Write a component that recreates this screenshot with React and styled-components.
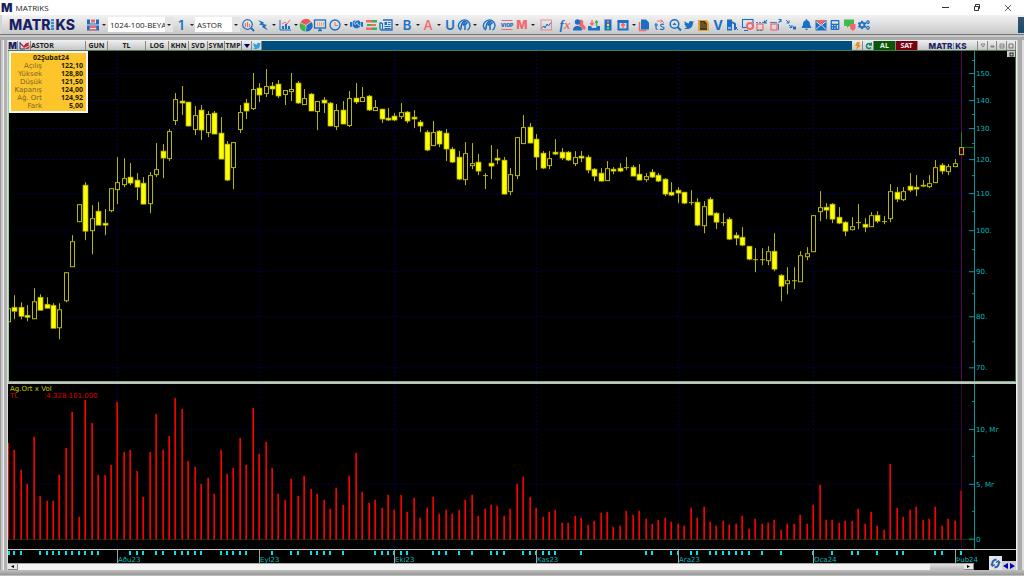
import React from "react";
import styled, { createGlobalStyle } from "styled-components";
import { FaTwitter, FaBell, FaHandshake, FaCalculator, FaCogs } from "react-icons/fa";

const BLUE = "#1b6fc4";
const RED = "#f2686c";
const NAVY = "#1c1f63";
const SANS = '"Open Sans", "Noto Sans", sans-serif';
const CHART = '"DejaVu Sans", Verdana, sans-serif';

const GlobalStyle = createGlobalStyle`
  * { box-sizing: border-box; }
  body { margin: 0; background: #b4b4b4; font-family: ${SANS}; }
  button, select { font: inherit; margin: 0; border: 0; padding: 0; }
`;

/* ---------- data: high, body top, body bottom, low, kind (f filled, h hollow, t thin) ---------- */
const candles = [
  [308,308,321,321,"h"],[295,307,311,319,"f"],[302,307,316,319,"f"],[305,315,317,321,"f"],[288,301,318,318,"h"],
  [294,297,310,310,"f"],[297,304,308,308,"f"],[303,305,328,328,"f"],[303,309,327,339,"h"],[272,272,300,302,"h"],
  [235,241,266,266,"h"],[204,204,221,222,"h"],[182,185,231,240,"f"],[205,218,230,254,"h"],[202,211,225,225,"f"],
  [209,223,225,235,"f"],[188,188,210,212,"h"],[157,182,189,204,"h"],[158,178,184,187,"h"],[163,177,183,185,"f"],
  [173,180,187,200,"f"],[177,183,204,204,"f"],[172,175,203,213,"h"],[143,169,174,177,"h"],[144,151,158,178,"f"],
  [129,131,158,161,"h"],[93,99,120,125,"h"],[86,101,103,115,"f"],[102,102,126,126,"f"],[106,115,129,135,"h"],
  [105,110,130,140,"f"],[111,114,132,137,"h"],[111,113,134,134,"f"],[117,133,159,159,"f"],[141,144,180,181,"f"],
  [142,142,167,189,"h"],[105,112,129,133,"h"],[99,103,111,119,"f"],[73,89,108,110,"h"],[83,88,95,102,"f"],
  [69,86,93,97,"h"],[82,86,89,95,"f"],[80,84,96,98,"f"],[90,90,94,105,"h"],[73,89,91,101,"h"],
  [81,83,103,104,"f"],[89,98,104,104,"h"],[93,94,111,111,"f"],[101,101,111,130,"h"],[97,100,103,113,"f"],
  [102,103,126,126,"f"],[104,110,126,130,"h"],[101,110,124,124,"f"],[91,98,125,127,"h"],[83,98,102,104,"f"],
  [87,97,101,101,"h"],[95,96,110,111,"f"],[100,107,110,111,"h"],[109,109,119,123,"f"],[108,118,120,121,"f"],
  [113,116,120,121,"f"],[103,112,116,119,"h"],[111,112,121,123,"f"],[110,117,119,128,"f"],[120,122,126,132,"f"],
  [130,132,150,151,"f"],[121,132,145,145,"h"],[130,131,144,147,"f"],[129,133,149,161,"f"],[147,149,162,163,"f"],
  [151,157,179,180,"f"],[142,153,179,185,"h"],[143,163,165,169,"h"],[154,162,171,175,"f"],[173,175,176,189,"t"],
  [145,163,166,179,"f"],[149,158,160,164,"f"],[157,160,194,194,"f"],[168,174,191,195,"h"],[137,137,175,179,"h"],
  [115,127,143,144,"h"],[123,127,143,143,"f"],[134,139,157,170,"f"],[151,153,168,169,"f"],[151,158,165,169,"h"],
  [139,152,154,155,"f"],[148,152,158,160,"f"],[151,152,160,161,"f"],[151,157,163,166,"h"],[151,156,158,162,"f"],
  [155,157,170,173,"f"],[168,169,176,181,"f"],[168,173,181,181,"f"],[161,168,180,180,"h"],[167,169,171,174,"f"],
  [163,168,171,172,"f"],[157,167,168,170,"t"],[165,167,176,176,"f"],[164,174,180,180,"f"],[173,176,179,182,"h"],
  [169,172,177,178,"f"],[173,175,181,182,"f"],[178,179,194,196,"f"],[182,192,195,196,"f"],[187,190,193,203,"f"],
  [192,192,203,204,"f"],[190,202,203,205,"t"],[198,202,225,226,"f"],[201,206,225,233,"h"],[197,199,215,215,"f"],
  [212,213,222,229,"f"],[213,222,223,226,"t"],[217,219,239,240,"f"],[232,235,238,245,"f"],[227,237,245,246,"f"],
  [246,246,259,260,"f"],[248,259,260,272,"t"],[248,259,260,265,"t"],[246,251,260,265,"h"],[233,251,269,271,"f"],
  [274,275,286,301,"f"],[267,280,283,294,"h"],[267,280,281,289,"t"],[251,255,281,281,"h"],[247,253,256,260,"h"],
  [215,215,251,251,"h"],[191,207,211,221,"h"],[203,207,210,219,"f"],[203,204,219,223,"f"],[207,217,223,224,"f"],
  [221,222,231,236,"f"],[217,226,229,230,"h"],[204,222,223,229,"t"],[218,224,227,232,"f"],[212,215,226,226,"h"],
  [211,215,221,223,"f"],[216,221,222,224,"t"],[184,191,218,222,"h"],[187,192,199,202,"f"],[187,191,199,201,"h"],
  [173,186,190,192,"f"],[175,187,189,196,"f"],[180,185,186,187,"f"],[175,183,186,188,"h"],[160,167,182,182,"h"],
  [163,165,171,174,"f"],[164,166,171,175,"h"],[159,163,166,166,"h"],[132,147,154,154,"h"],
];

/* tops of the volume bars, in thirds of a unit below the panel's upper edge */
const volumes = [
  188,209,271,313,171,349,364,364,286,205,97,411,60,129,286,286,256,67,217,209,274,352,215,101,209,167,53,88,244,262,
  313,293,341,211,283,265,175,256,85,221,187,263,341,361,297,349,288,328,341,360,388,325,374,288,219,335,369,361,383,345,
  391,345,395,353,415,385,352,401,391,401,391,360,345,409,387,375,377,407,387,313,291,352,385,411,397,389,428,428,407,415,
  435,424,400,397,441,437,393,405,393,417,431,419,413,425,433,437,385,413,381,425,437,424,435,433,409,447,417,432,430,419,
  451,433,431,405,432,374,315,421,421,428,424,424,388,433,396,437,451,251,384,411,391,381,419,417,381,437,417,424,333,
];

const dayTicks = [
  0,1,2,5,6,7,8,9,10,11,12,13,14,19,20,21,23,24,26,27,28,29,30,33,34,35,36,37,41,44,45,47,48,49,50,52,57,58,59,60,61,62,
  66,67,68,70,72,75,76,77,80,81,82,83,84,85,89,99,100,103,104,106,107,109,110,111,112,113,114,115,117,120,125,128,131,
  132,135,138,139,144,145,148,
];

const months = [[17,"Aðu23"],[39,"Eyl23"],[60,"Eki23"],[82,"Kas23"],[104,"Ara23"],[125,"Oca24"],[147,"Þub24"]];
const prices = [[150,73],[140,100],[130,128],[120,159],[110,193],[100,230],[90,271],[80,316],[70,367]];
const barX = (i) => Math.floor(8.45 + 6.441 * i);
const PLOT_LEFT = 8;
const PLOT_WIDTH = 966;

/* ---------- window ---------- */
const Window = styled.div`
  display: flex;
  flex-direction: column;
  height: 100vh;
  min-height: 420px;
  overflow: hidden;
  background: #b0b0b0;
`;

const TitleBar = styled.header`
  display: flex;
  align-items: center;
  flex: none;
  height: 15px;
  padding: 0 10px 0 1px;
  gap: 3px;
  background: #fff;
  font-size: 8px;
  line-height: 15px;
  color: #222;
`;
const Monogram = styled.span`
  font-family: Inter, sans-serif;
  font-weight: 900;
  font-size: ${(p) => p.$size}px;
  line-height: 1;
  color: ${NAVY};
`;
const AppName = styled.span`flex: 1;`;
const WindowButton = styled.button`
  display: grid;
  place-items: center;
  width: 12px;
  height: 15px;
  margin-left: 16px;
  background: none;
`;

const Toolbar = styled.nav`
  display: flex;
  align-items: center;
  flex: none;
  height: 19px;
  padding-left: 7px;
  background: linear-gradient(#f2f2f2, #dedede 50%, #c8c8c8);
  border-left: 2px solid #d4d4d4;
`;
const Brand = styled.span`
  display: inline-flex;
  align-items: center;
  justify-content: center;
  font-family: Inter, sans-serif;
  font-weight: 800;
  font-size: ${(p) => p.$size}px;
  line-height: 1;
  color: ${NAVY};
`;
const ToolbarBrand = styled(Brand)`
  flex: none;
  width: 77px;
  justify-content: flex-start;
`;
const BrandDots = styled.svg`
  flex: none;
  margin: 0 1px;
`;
const Tool = styled.button`
  display: flex;
  align-items: center;
  flex: none;
  width: ${(p) => p.$w}px;
  height: 16px;
  background: none;
  color: ${BLUE};
`;
const ToolIcon = styled.span`
  display: grid;
  place-items: center;
  flex: none;
  width: 14px;
  height: 14px;
  svg { display: block; }
`;
const Caret = styled.span`
  flex: none;
  width: 0;
  margin-left: 2px;
  border: 2px solid transparent;
  border-top-color: #222;
  border-bottom: 0;
`;
const Glyph = styled.span`
  font-family: Inter, sans-serif;
  font-weight: ${(p) => p.$weight || 600};
  font-size: ${(p) => p.$size || 13}px;
  line-height: 14px;
  color: ${(p) => p.$color || BLUE};
`;
const Formula = styled.span`
  font: italic 600 13px/14px "Liberation Serif", serif;
  color: ${BLUE};
  i { color: ${RED}; }
`;
const Picker = styled.label`
  position: relative;
  display: flex;
  flex: none;
  width: ${(p) => p.$w}px;
  height: 15px;
  margin-right: 1px;
  background: #fff;
`;
const PickerSelect = styled.select`
  appearance: none;
  flex: 1;
  min-width: 0;
  padding-left: 2px;
  background: #fff;
  border-radius: 0;
  font-size: 8px;
  color: #222;
`;
const PickerArrow = styled.span`
  display: grid;
  place-items: center;
  width: 8px;
  background: #e4e4e4;
  pointer-events: none;
  ${Caret} { margin: 0; }
`;
const ToolbarEnd = styled.span`
  align-self: stretch;
  width: 6px;
  margin: 2px 0 1px auto;
  background: linear-gradient(#35566c, #164a6e);
`;

/* ---------- chart window ---------- */
const Frame = styled.main`
  display: flex;
  flex-direction: column;
  flex: 1;
  min-height: 0;
  padding: 6px 8px 6px;
  background:
    linear-gradient(#777 0 1px, #c8c8c8 1px 3px, #aaa 3px) top / 100% 6px no-repeat,
    linear-gradient(#c0c0c0, #999 80%, #d6d6d6) bottom / 100% 6px no-repeat,
    linear-gradient(90deg, #999 0 1px, #c8c8c8 1px 3px, #f0f0f0 3px 4px, #b0b0b0 4px 7px, #ddd 7px) left / 8px 100% no-repeat,
    linear-gradient(90deg, #eee 0 1px, #ccc 1px 2px, #aaa 2px 6px, #ddd 6px) right / 8px 100% no-repeat;
`;
const ChartBar = styled.div`
  display: flex;
  flex: none;
  height: 11px;
  border-top: 1px solid #e8eef2;
  border-bottom: 1px solid #4c7a50;
  background: #00507f;
  font: bold 7px/9px "Noto Sans", sans-serif;
  color: #222;
`;
const Cell = styled.button`
  display: flex;
  align-items: center;
  justify-content: ${(p) => (p.$start ? "flex-start" : "center")};
  flex: none;
  width: ${(p) => p.$w}px;
  height: 9px;
  border-right: 1px solid #888;
  background: ${(p) => p.$bg || "linear-gradient(#ececec, #c6c6c6)"};
  color: ${(p) => p.$color || "#222"};
`;
const Spacer = styled.span`flex: 1;`;

const Pane = styled.section`
  position: relative;
  display: flex;
  flex: ${(p) => p.$grow} 1 0;
  min-height: 0;
  background: #000;
`;
const PricePane = styled(Pane)`
  border-left: 1px solid #90d890;
  border-right: 1px solid #3a6a3a;
  border-bottom: 1px solid #7fb87f;
`;
const Divider = styled.div`
  flex: none;
  height: 2px;
  background: #c4c4c4;
`;
const Plot = styled.svg`
  display: block;
  flex: 1;
  min-width: 0;
  width: 0;
  height: 100%;
  overflow: hidden;
`;
const AxisScale = styled.svg`
  display: block;
  flex: none;
  width: ${(p) => p.$w}px;
  height: 100%;
  overflow: visible;
  font: 7px ${CHART};
  fill: #00bcbc;
`;
const InfoBox = styled.table`
  position: absolute;
  top: 0;
  left: 0;
  width: 79px;
  padding: 1px 3px 1px 0;
  border: 2px solid #f4f4f4;
  border-collapse: separate;
  border-spacing: 0;
  background: #fcc52c;
  font: 7px/8px ${CHART};
  td, th { padding: 0; height: 8px; text-align: right; white-space: nowrap; }
  th { width: 31px; font-weight: normal; color: #7d6524; }
  td { font: bold 7px/8px "Noto Sans", sans-serif; color: #221a00; }
`;
const InfoTitle = styled.td`
  && { padding-left: 8px; text-align: center; }
`;
const Maximise = styled.button`
  position: absolute;
  top: 0;
  right: 0;
  display: grid;
  place-items: center;
  width: 8px;
  height: 6px;
  background: #ccc;
`;
const VolumeLegend = styled.div`
  position: absolute;
  top: 2px;
  left: 2px;
  font: 7px/7px ${CHART};
  color: #cccc00;
`;
const VolumeValue = styled.div`
  display: flex;
  color: #dc0000;
  span:first-child { width: 34px; }
`;
const Footer = styled.div`
  display: flex;
  flex: none;
  height: 21px;
  border-top: 1px solid #c8c8c8;
  background: #000;
`;
const FooterMain = styled.div`
  display: flex;
  flex-direction: column;
  flex: 1;
  min-width: 0;
`;
const TimeAxis = styled.svg`
  display: block;
  width: 100%;
  height: 13px;
  overflow: visible;
  font: 7px ${CHART};
  fill: #00bcbc;
`;
const ScrollBar = styled.div`
  display: flex;
  height: 7px;
  border-top: 1px solid #aaa;
  background: #f4f4f4;
`;
const ScrollButton = styled.button`
  width: 10px;
  height: 6px;
  display: grid;
  place-items: center;
  background: #e6e6e6;
  border-right: 1px solid #888;
  border-bottom: 1px solid #888;
`;
const Thumb = styled.span`
  width: 34px;
  margin-left: auto;
  background: linear-gradient(#e0e0e0, #b8b8b8);
`;
const FooterTools = styled.div`
  display: flex;
  align-items: flex-end;
  justify-content: flex-end;
  width: 42px;
`;
const RefreshButton = styled.button`
  display: grid;
  place-items: center;
  width: 13px;
  height: 14px;
  background: #e2e4ea;
`;
const StepButton = styled.button`
  display: grid;
  place-items: center;
  width: 7px;
  height: 9px;
  background: #d0d0d0;
`;

/* ---------- toolbar icons, on a 14-unit square ---------- */
const Svg = ({ children, size = 14 }) => (
  <svg width={size} height={size} viewBox="0 0 14 14" fill="none" aria-hidden="true">{children}</svg>
);
const icons = {
  save: <Svg><path d="M1 1.500h3v4h6v-4h3v11H1z" fill={BLUE} /><path d="M5 1.500h4V4.500H5zM3.500 8h7v4.500h-7z" fill={RED} /><path d="M1 7h12M4 10.500h6" stroke="#f4e4e4" /></Svg>,
  search: <Svg><circle cx="6.500" cy="6.500" r="4.800" stroke={BLUE} strokeWidth="1.200" /><path d="M10 10l3 3" stroke={BLUE} strokeWidth="1.800" /><path d="M4.500 5v4M6.500 4v5M8.500 6v3" stroke={RED} /></Svg>,
  bolt: <Svg><path d="M2 2l6 2.500-1 1.500 4 1-2 1.500 3 4-6-3.500 1-1.500-4-1 2-1.500z" fill={BLUE} /></Svg>,
  columns: <Svg><path d="M2 2v10h11" stroke={BLUE} /><path d="M4 8h2v3H4zM7 6h2v5H7zM10 8h2v3h-2z" fill={BLUE} /><path d="M4 6l3-2 2 2 3-4" stroke={RED} /></Svg>,
  pie: <Svg><path d="M6.500 7.500L1.200 5a6 6 0 0 0 5.300 8.500z" fill="#39b54a" /><path d="M7 7l-5.500-2.500A6 6 0 0 1 12 3.500z" fill="#ee5558" /><path d="M7.500 7.500l5-3.500a6 6 0 0 1-5.500 9.500z" fill={BLUE} /></Svg>,
  screen: <Svg><rect x="1.500" y="2" width="11" height="8" stroke={BLUE} strokeWidth="1.300" /><path d="M5 12.500h4M7 10v2" stroke={BLUE} strokeWidth="1.500" /><path d="M4.500 4v4M6.500 4v4M8.500 4v4M10.500 4v4" stroke="#ecab76" /></Svg>,
  clock: <Svg><circle cx="7" cy="7" r="5" stroke={BLUE} strokeWidth="1.300" /><path d="M7 4v3.500h3" stroke={RED} /></Svg>,
  hands: <FaHandshake size={13} />,
  depth: <Svg><path d="M2 2h6v2.500H2zM7 6h5v2H7zM2 9.500h6V12H2z" fill={RED} /><path d="M8 2h5v2.500H8zM3 6h4v2H3zM8 9.500h5V12H8z" fill="#3bb54a" /></Svg>,
  news: <Svg><path d="M4 2h9v10H3c-1.500 0-2-.8-2-2V5h2" stroke={BLUE} strokeWidth="1.300" /><path d="M5.500 4h2.500v3H5.500z" fill={BLUE} /><path d="M9 4.500h2.500M9 6.500h2.500M5.500 8.500h6M5.500 10.500h6M3.500 5v6" stroke={BLUE} /></Svg>,
  globe: <Svg><path d="M4 12C1 10.500.5 6.500 3 4s6-3 8.500-.2 1.500 7-1 8.200" stroke={BLUE} strokeWidth="1.400" /><path d="M4 11c0-4 1-7 4-8l2 2-2 2v5M6 7.500l2-3" stroke={BLUE} strokeWidth="1.500" /></Svg>,
  chart: <Svg><rect x="2" y="2" width="10.500" height="10" stroke={RED} strokeWidth=".7" /><path d="M2.500 10l2.500-2 1 2 2-4 1.500 2L12 4.500" stroke={BLUE} /></Svg>,
  users: <Svg><path d="M7.500 2c3-1 4.500 1 3.500 4l2.500 3v2.500H10c0-2-1-3-3-4z" fill={RED} /><circle cx="5.500" cy="4" r="2.700" fill={BLUE} /><path d="M1 12.500c0-3.500 2-4.500 4.500-4.500s4.500 1 4.500 4.500z" fill={BLUE} /></Svg>,
  inbox: <Svg><path d="M1 8h3l1 2h4l1-2h3v4.500H1z" fill={BLUE} /><path d="M5 2v5M3 5l2 2 2-2" stroke={RED} strokeWidth="1.400" /><path d="M9.500 8V3M8 4.500L9.500 3 11 4.500" stroke="#3bb54a" strokeWidth="1.400" /></Svg>,
  lights: <Svg><rect x="3.500" y="1.500" width="7" height="11" fill={BLUE} /><circle cx="7" cy="3.700" r="1.200" fill="#f66" /><circle cx="7" cy="7" r="1.200" fill="#fd4" /><circle cx="7" cy="10.200" r="1.200" fill="#5d5" /></Svg>,
  upload: <Svg><path d="M1.500 2h11v2h-11z" fill={BLUE} /><rect x="2.500" y="4" width="9" height="7.500" stroke={BLUE} strokeWidth="2" /><path d="M7 10V6M5 7.500L7 5.500l2 2" stroke={RED} strokeWidth="1.500" /></Svg>,
  pages: <Svg><path d="M2.500 4v8.500h7" stroke={RED} strokeWidth="1.400" /><path d="M4 1.500h5l3 3v7H4z" fill={BLUE} /></Svg>,
  currency: <Svg><path d="M5 3h5l2 2M9 1.500L10.500 3 9 4.500" stroke={RED} /><path d="M4 5v5c0 1 .5 1.500 1.500 1.500M2.500 7h3.500" stroke={BLUE} strokeWidth="1.200" /><path d="M12 6.500c-2-1-4 0-3 1.500s3 .5 3 2-2 2-4 1" stroke={BLUE} strokeWidth="1.200" /></Svg>,
  zoom: <Svg><circle cx="6.500" cy="6" r="4.300" stroke={BLUE} strokeWidth="1.500" /><path d="M9.500 9l3.500 3.500" stroke={BLUE} strokeWidth="2" /><path d="M4.500 7l2-2.500 2 2.500z" fill={BLUE} /></Svg>,
  tweet: <FaTwitter size={10} />,
  note: <Svg><path d="M2 2h7c3 0 4 2 4 5v6H2z" fill="#d9a441" /><path d="M4 3h3c3 0 4 2 4 5v4H4z" fill="#4a3920" /><path d="M4 5h4M4 7h6M4 9h7" stroke="#8a6a30" /></Svg>,
  doc: <Svg><path d="M2 1.500h5v11H2z" fill={BLUE} /><path d="M7 4l3 2v6" stroke={BLUE} strokeWidth="2" /><path d="M9 8l4 4M9 12l3-3" stroke={BLUE} /><path d="M3 10h3" stroke="#fff" /></Svg>,
  block: <Svg><rect x="1.500" y="1.500" width="10.500" height="8" stroke={BLUE} strokeWidth="1.100" /><path d="M3 12.500h4" stroke={BLUE} /><circle cx="9" cy="8" r="3" stroke={RED} strokeWidth="2" fill="#f6e0e0" /></Svg>,
  shrink: <Svg><rect x="2" y="6" width="6" height="6" stroke={RED} strokeWidth="1.200" /><path d="M1 4.500h8M2 12.500h6" stroke={BLUE} strokeWidth=".8" strokeDasharray="2 1" /><path d="M12 2L9.500 5M9.500 2.500V5H12" stroke={BLUE} strokeWidth="1.100" /></Svg>,
  grow: <Svg><rect x="2" y="6" width="6" height="6" stroke={RED} strokeWidth="1.200" /><path d="M1 4.500h7M9.500 6v6" stroke={BLUE} strokeWidth=".8" /><path d="M9.500 5L12 2M9.500 1.500H12V4" stroke={BLUE} strokeWidth="1.100" /></Svg>,
  arrows: <Svg><path d="M2 2l3 3M5 2.500V5H2.500M5 7l3 2.500M8 7v2.500H5.500" stroke={BLUE} /><path d="M9 8.500h3v3H9z" fill={BLUE} /></Svg>,
  bell: <FaBell size={11} />,
  mail: <Svg><path d="M1.500 2h11v10.500h-11z" fill={BLUE} /><path d="M2 2h10L7 7z" fill={RED} /><path d="M2 3.500l5 4 5-4M2 11.500l4-4M12 11.500l-4-4" stroke="#f6e8e8" /></Svg>,
  calc: <FaCalculator size={10} />,
  chat: <Svg><path d="M1 1.500h10V8H6l-2 2V8H1z" fill="#3fba4c" /><path d="M7 6h5.500v4.500L10 13l-3-2.500z" fill={RED} /></Svg>,
  gears: <FaCogs size={12} />,
};

const tools = [
  ["Ara", icons.search, 15], ["Hızlı emir", icons.bolt, 22, 1], ["Grafik", icons.columns, 21, 1], ["Dağılım", icons.pie, 14],
  ["Ekran", icons.screen, 15], ["Saat", icons.clock, 21, 1], ["İşlemler", icons.hands, 15], ["Derinlik", icons.depth, 15],
  ["Haber", icons.news, 21, 1], ["B", <Glyph>B</Glyph>, 21, 1], ["A", <Glyph $color={RED} $weight={500}>A</Glyph>, 22, 1],
  ["U", <Glyph>U</Glyph>, 14], ["Dünya", icons.globe, 25, 1], ["Piyasa", icons.globe, 18],
  ["VIOP", <Viop />, 15], ["M", <Glyph $color={RED} $weight={800} $size={12}>M</Glyph>, 24, 1], ["Çizgi", icons.chart, 19],
  ["Formül", <Formula>f<i>x</i></Formula>, 14], ["Kullanıcılar", icons.users, 15], ["Gelen", icons.inbox, 14],
  ["Sinyal", icons.lights, 15], ["Yükle", icons.upload, 21, 1], ["Sayfalar", icons.pages, 15], ["Döviz", icons.currency, 16],
  ["Yakınlaş", icons.zoom, 14], ["Twitter", icons.tweet, 14], ["Not", icons.note, 15], ["V", <Glyph $weight={700}>V</Glyph>, 14],
  ["Belge", icons.doc, 16], ["Durdur", icons.block, 14], ["Küçült", icons.shrink, 14], ["Büyüt", icons.grow, 15],
  ["Taşı", icons.arrows, 15], ["Alarm", icons.bell, 15], ["Posta", icons.mail, 14], ["Hesap", icons.calc, 15],
  ["Sohbet", icons.chat, 14], ["Ayarlar", icons.gears, 15],
];

function Viop() {
  return (
    <svg width="14" height="14" viewBox="0 0 14 14" aria-hidden="true">
      <path d="M1.500 2.500h11M1.500 11.500h11" stroke={RED} />
      <text x="7" y="9" textAnchor="middle" fontFamily="Inter, sans-serif" fontWeight="900" fontSize="5" fill={BLUE}>VIOP</text>
    </svg>
  );
}

function MatriksLogo({ as: Box = Brand, size }) {
  const h = Math.round(size * 0.75);
  return (
    <Box $size={size}>
      MATR
      <BrandDots width={size > 10 ? 3 : 1} height={h} viewBox="0 0 3 10" preserveAspectRatio="none" aria-hidden="true">
        <path d="M0 0h3v2H0zM0 2.700h3v2H0zM0 5.400h3v2H0zM0 8h3v2H0z" fill="#3b8fd0" />
      </BrandDots>
      KS
    </Box>
  );
}

function ToolButton({ label, width, caret, children }) {
  return (
    <Tool $w={width} aria-label={label}>
      <ToolIcon>{children}</ToolIcon>
      {caret ? <Caret /> : null}
    </Tool>
  );
}

function SymbolPicker({ label, width, value }) {
  return (
    <Picker $w={width}>
      <PickerSelect aria-label={label} defaultValue={value}>
        <option>{value}</option>
      </PickerSelect>
      <PickerArrow><Caret /></PickerArrow>
    </Picker>
  );
}

function Candle({ index, data }) {
  const [high, top, bottom, low, kind] = data;
  const x = barX(index);
  const last = index === candles.length - 1;
  const line = "#b8b800";
  return (
    <g>
      <rect x={x} y={high} width="1" height={Math.max(1, (kind === "h" ? top : low) - high)} fill={last ? "#2f8040" : line} />
      {kind === "h" && low > bottom && <rect x={x} y={bottom} width="1" height={low - bottom} fill={line} />}
      {kind === "h" && <rect x={x - 1.5} y={top + 0.5} width="4" height={Math.max(1, bottom - top)} fill={last ? "#3a0030" : "#000"} stroke={line} />}
      {kind === "f" && <rect x={x - 2} y={top} width="5" height={bottom - top} fill="#ffff00" stroke="#a8a800" strokeWidth="0.700" />}
      {kind === "t" && <rect x={x - 2} y={top} width="5" height="1" fill={line} />}
    </g>
  );
}

function Grid({ rows, top, bottom }) {
  return (
    <g stroke="#000054" strokeDasharray="2 2">
      {rows.map((y) => <path key={y} d={`M12 ${y + 0.5}H974`} />)}
      {months.map(([i]) => <path key={i} d={`M${barX(i) + 0.5} ${top}V${bottom}`} />)}
    </g>
  );
}

const pct = (value, start, size) => `${((value - start) / size) * 100}%`;

function Scale({ top, height, width, ticks, minors }) {
  return (
    <AxisScale $w={width}>
      <rect x="0" y="0" width="1" height="100%" fill="#009c9c" />
      {ticks.map(([label, y]) => (
        <g key={label}>
          <rect x="-5" y={pct(y, top, height)} width="5" height="1" fill="#009c9c" />
          <text x="2" y={pct(y + 3, top, height)}>{label}</text>
        </g>
      ))}
      {minors.map((y) => <rect key={y} x="-2" y={pct(y, top, height)} width="2" height="1" fill="#009c9c" />)}
    </AxisScale>
  );
}

const readings = [["Açılış", "122,10"], ["Yüksek", "128,80"], ["Düşük", "121,50"], ["Kapanış", "124,00"], ["Ağ. Ort", "124,92"], ["Fark", "5,00"]];

function PriceChart() {
  return (
    <PricePane $grow={331}>
      <Plot viewBox="9 51 965 330" preserveAspectRatio="none" role="img" aria-label="ASTOR">
        <Grid rows={prices.map((p) => p[1])} top={51} bottom={381} />
        <rect x="961" y="51" width="1" height="330" fill="#580058" />
        <rect x="964" y="147" width="10" height="1" fill="#007000" />
        {candles.map((c, i) => <Candle key={i} index={i} data={c} />)}
      </Plot>
      <Scale top={51} height={330} width={41} ticks={prices.map(([p, y]) => [`${p}.`, y])}
        minors={[60, 86, 114, 143, 175, 211, 249, 293, 341]} />
      <InfoBox>
        <tbody>
          <tr><InfoTitle colSpan={2}>02Şubat24</InfoTitle></tr>
          {readings.map(([k, v]) => <tr key={k}><th scope="row">{k}</th><td>{v}</td></tr>)}
        </tbody>
      </InfoBox>
      <Maximise aria-label="Büyüt">
        <svg width="5" height="5" viewBox="0 0 5 5"><rect x="1" y="1" width="3" height="3" fill="none" stroke="#222" /></svg>
      </Maximise>
    </PricePane>
  );
}

function VolumeChart() {
  return (
    <Pane $grow={165}>
      <Plot viewBox="8 384 966 165" preserveAspectRatio="none" role="img" aria-label="Hacim">
        <Grid rows={[429, 484]} top={384} bottom={549} />
        <rect x="8" y="539" width="966" height="1" fill="#004800" />
        {volumes.map((v, i) => {
          const y = Math.round(380 + v / 3);
          const x = barX(i);
          return (
            <g key={i}>
              <rect x={x - 1} y={y} width="1" height={540 - y} fill="#a80000" />
              <rect x={x} y={y} width="1" height={540 - y} fill="#f40000" />
            </g>
          );
        })}
        <rect x="961" y="384" width="1" height="165" fill="#580058" fillOpacity="0.600" />
      </Plot>
      <Scale top={384} height={165} width={42} ticks={[["10, Mr", 429], ["5, Mr", 484], ["0", 539]]} minors={[401, 456, 511]} />
      <VolumeLegend>
        Ag.Ort x Vol
        <VolumeValue><span>TL</span><span>:4.328.101.000</span></VolumeValue>
      </VolumeLegend>
    </Pane>
  );
}

function TimeFooter() {
  const at = (x) => pct(x, PLOT_LEFT, PLOT_WIDTH);
  return (
    <Footer>
      <FooterMain>
        <TimeAxis>
          {dayTicks.map((i) => <rect key={i} x={at(Math.max(PLOT_LEFT, barX(i) - 1))} y="1" width="2" height="4" fill="#00e4ec" />)}
          {months.map(([i, name]) => (
            <g key={name}>
              <rect x={at(barX(i))} y="0" width="1" height="13" fill="#a0a0a0" />
              <text x={at(barX(i) + 1)} y="12">{name}</text>
            </g>
          ))}
        </TimeAxis>
        <ScrollBar>
          <ScrollButton aria-label="Sola"><svg width="3" height="3"><path d="M3 0L0 1.500L3 3z" /></svg></ScrollButton>
          <Thumb />
          <ScrollButton aria-label="Sağa"><svg width="3" height="3"><path d="M0 0L3 1.500L0 3z" /></svg></ScrollButton>
        </ScrollBar>
      </FooterMain>
      <FooterTools>
        <RefreshButton aria-label="Yenile">
          <svg width="11" height="11" viewBox="0 0 11 11" fill="none" stroke="#2a5fa8" strokeWidth="2">
            <path d="M6.500 1.500C3 2 1.500 4.500 2.500 7.500M4.500 9.500C8 9 9.500 6.500 8.500 3.500" /><path d="M.8 6l1.700 2.200L5 6.500M10.200 5L8.500 2.800 6 4.500" strokeWidth="1.200" />
          </svg>
        </RefreshButton>
        <StepButton aria-label="Geri"><svg width="5" height="6"><path d="M5 0L0 3L5 6z" fill="#0000c0" /></svg></StepButton>
        <StepButton aria-label="İleri"><svg width="5" height="6"><path d="M0 0L5 3L0 6z" fill="#0000c0" /></svg></StepButton>
      </FooterTools>
    </Footer>
  );
}

function ChartHeader() {
  return (
    <ChartBar>
      <Cell $w={10} aria-label="Matriks"><Monogram $size={9}>M</Monogram></Cell>
      <Cell $w={13} aria-label="Grafik tipi">
        <svg width="11" height="8" viewBox="0 0 11 8" fill="none">
          <path d="M1 1l4 4 2-3 3-1" stroke="#c02030" strokeWidth="1.200" /><path d="M1 0v7h5" stroke="#303880" />
          <circle cx="8" cy="4.500" r="2.500" fill="#c02030" /><path d="M6 6l4-2" stroke="#d8d8e8" />
        </svg>
      </Cell>
      <Cell $w={55} $start>ASTOR</Cell>
      <Cell $w={22}>GUN</Cell>
      <Cell $w={38}>TL</Cell>
      <Cell $w={23}>LOG</Cell>
      <Cell $w={20}>KHN</Cell>
      <Cell $w={19}>SVD</Cell>
      <Cell $w={17}>SYM</Cell>
      <Cell $w={17}>TMP</Cell>
      <Cell $w={10} aria-label="Menü"><svg width="6" height="4"><path d="M0 0h6L3 4z" fill="#000050" /></svg></Cell>
      <Cell $w={10} aria-label="Twitter" $color="#2aa3e0"><FaTwitter size={8} /></Cell>
      <Spacer />
      <Cell $w={11} aria-label="Hızlı emir"><svg width="7" height="8"><path d="M3 0h3L5 3h2L2 8l1-4H1z" fill="#e89210" /></svg></Cell>
      <Cell $w={11} aria-label="Yenile">
        <svg width="7" height="8" fill="none" stroke="#108a68" strokeWidth="1.500"><path d="M6 2.500A2.500 2.500 0 1 0 6 5.500M4 3h2.500V.5" /></svg>
      </Cell>
      <Cell $w={22} $bg="#085808" $color="#e8f4e8">AL</Cell>
      <Cell $w={22} $bg="#780010" $color="#f8e4e4">SAT</Cell>
      <Cell $w={60} aria-label="Matriks"><MatriksLogo size={8} /></Cell>
      <Cell $w={10} aria-label="Aşağı"><svg width="6" height="5"><path d="M1 1h4L3 4z" fill="none" stroke="#888" /></svg></Cell>
      <Cell $w={9} aria-label="Simge"><svg width="5" height="5"><path d="M1 3h3v1H1z" fill="none" stroke="#777" /></svg></Cell>
      <Cell $w={10} aria-label="Düzenle"><svg width="6" height="6"><path d="M1 1h4v4H1zM1 3h4" fill="none" stroke="#888" /></svg></Cell>
      <Cell $w={9} aria-label="Kapat"><svg width="6" height="6"><path d="M1 1h4v4H1z" fill="none" stroke="#777" /></svg></Cell>
    </ChartBar>
  );
}

export default function App() {
  return (
    <Window>
      <GlobalStyle />
      <TitleBar>
        <Monogram $size={12}>M</Monogram>
        <AppName>MATRIKS</AppName>
        <WindowButton aria-label="Simge durumuna küçült"><svg width="8" height="8"><path d="M0 3.500h7" stroke="#333" /></svg></WindowButton>
        <WindowButton aria-label="Önceki boyut"><svg width="8" height="8" fill="none" stroke="#333"><path d="M1.500 2.500h4v4h-4zM2.500 2V.5h4v4H6" /></svg></WindowButton>
        <WindowButton aria-label="Kapat"><svg width="8" height="8"><path d="M1 1l6 6M7 1L1 7" stroke="#333" strokeWidth=".8" /></svg></WindowButton>
      </TitleBar>
      <Toolbar>
        <MatriksLogo as={ToolbarBrand} size={14} />
        <ToolButton label="Kaydet" width={22} caret>{icons.save}</ToolButton>
        <SymbolPicker label="Sayfa" width={65} value="1024-100-BEYAZ" />
        <ToolButton label="Sayfa no" width={21} caret><Glyph>1</Glyph></ToolButton>
        <SymbolPicker label="Sembol" width={45} value="ASTOR" />
        {tools.map(([label, icon, width, caret]) => (
          <ToolButton key={label} label={label} width={width} caret={caret}>{icon}</ToolButton>
        ))}
        <ToolbarEnd />
      </Toolbar>
      <Frame>
        <ChartHeader />
        <PriceChart />
        <Divider />
        <VolumeChart />
        <TimeFooter />
      </Frame>
    </Window>
  );
}
